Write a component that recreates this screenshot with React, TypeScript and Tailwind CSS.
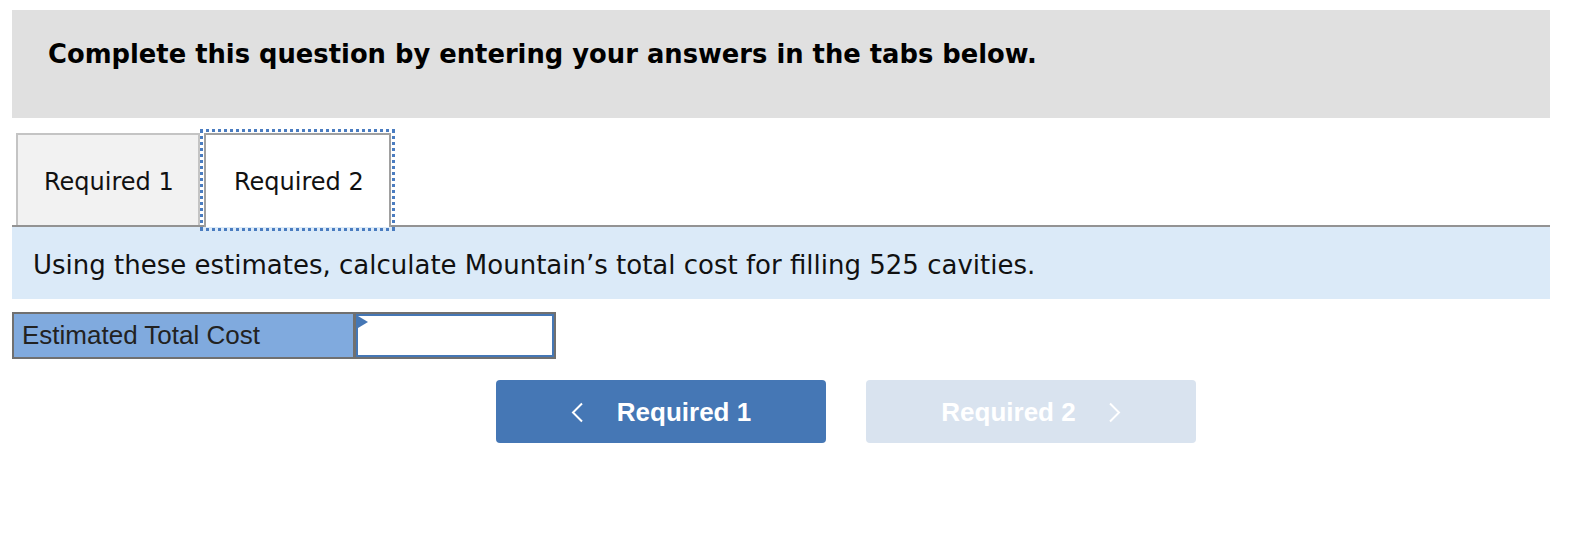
const verdana = { fontFamily: '"DejaVu Sans", Verdana, sans-serif' };
const arial = { fontFamily: '"Liberation Sans", Arial, sans-serif' };

function Chevron({ dir }: { dir: "left" | "right" }) {
  return (
    <svg width="13" height="21" viewBox="0 0 13 21" fill="none">
      <polyline
        points={dir === "left" ? "11,1.5 2,10.5 11,19.5" : "2,1.5 11,10.5 2,19.5"}
        stroke="currentColor"
        strokeWidth="2"
      />
    </svg>
  );
}

export default function App() {
  return (
    <div className="min-h-[556px] bg-white pl-[12px] pt-[10px]">
      <div className="w-[1538px]">
        {/* Instructions header */}
        <div className="h-[108px] bg-[#e0e0e0] pl-[36px] pt-[29px]">
          <p className="text-[25.8px] font-bold leading-[30px] text-black" style={verdana}>
            Complete this question by entering your answers in the tabs below.
          </p>
        </div>

        {/* Tabs */}
        <div className="mt-[11px] flex h-[98px] items-end border-b-2 border-[#939393]">
          <div
            className="ml-[4px] flex h-[92px] w-[184px] items-center border-x-2 border-t-2 border-[#c4c4c4] bg-[#f2f2f2] pl-[26px] pt-[4px] text-[24px] text-[#111]"
            style={verdana}
          >
            Required 1
          </div>
          <div
            className="relative mb-[-2px] ml-[4px] flex h-[94px] w-[187px] items-center border-x-2 border-t-2 border-[#a0a0a0] bg-white pl-[28px] pt-[2px] text-[24px] text-[#111] outline-[3px] outline-offset-[1px] outline-dotted outline-[#4a7cc0]"
            style={verdana}
          >
            Required 2
          </div>
        </div>

        {/* Question */}
        <div className="flex h-[72px] items-center bg-[#dbeaf8] pl-[21px] pt-[4px]">
          <p className="text-[26px] text-[#111]" style={verdana}>
            Using these estimates, calculate Mountain’s total cost for filling 525 cavities.
          </p>
        </div>

        {/* Answer table */}
        <div className="mt-[13px] flex h-[47px] w-[544px] border-2 border-[#707070]">
          <div className="flex w-[339px] items-center bg-[#80aade] pl-[8px] text-[26px] text-[#222]" style={arial}>
            Estimated Total Cost
          </div>
          <div className="w-[3px] bg-[#707070]" />
          <div className="relative flex-1 border-2 border-[#4577b5] bg-white">
            <svg className="absolute left-0 top-0" width="10" height="12" viewBox="0 0 10 12">
              <polygon points="0,0 10,6 0,12" fill="#4577b5" />
            </svg>
          </div>
        </div>

        {/* Navigation buttons */}
        <div className="ml-[484px] mt-[21px] flex gap-[40px]">
          <button
            className="flex h-[63px] w-[330px] items-center justify-center gap-[33px] rounded-[4px] bg-[#4577b5] pt-[2px] text-[26px] font-bold text-white"
            style={arial}
          >
            <Chevron dir="left" />
            <span>Required 1</span>
          </button>
          <button
            className="flex h-[63px] w-[330px] items-center justify-center gap-[32px] rounded-[4px] bg-[#d9e3ef] pt-[2px] text-[26px] font-bold text-white"
            style={arial}
          >
            <span>Required 2</span>
            <Chevron dir="right" />
          </button>
        </div>
      </div>
    </div>
  );
}
